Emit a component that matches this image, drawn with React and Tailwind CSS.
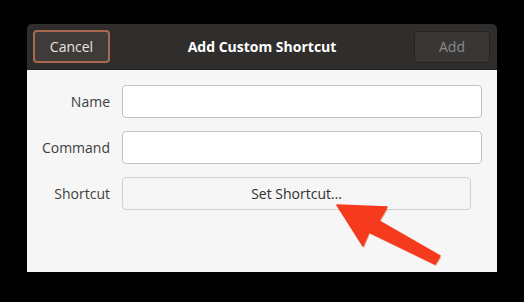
const Field = ({ label, children }) => (
  <div className="flex items-center h-[33px]">
    <div className="w-[83px] text-right text-[14px] text-[#3d3d3d]">{label}</div>
    <div className="ml-[12px] flex-1 h-full flex">{children}</div>
  </div>
);

const App = () => {
  return (
    <div
      className="relative w-[524px] h-[302px] bg-black overflow-hidden"
      style={{ fontFamily: '"Open Sans", "Noto Sans", sans-serif' }}
    >
      <div className="absolute left-[27px] top-[24px] w-[470px] rounded-t-[5px] overflow-hidden">
        <div className="h-[46px] bg-[#302e2d] flex items-center justify-between px-[6px] pr-[7px] border-b border-[#262423]">
          <button className="w-[77px] h-[33px] rounded-[4px] border-2 border-[#a9694f] bg-[#3e3b39] text-[14px] text-[#e8e6e3]">
            Cancel
          </button>
          <div className="text-[14px] font-bold text-white">Add Custom Shortcut</div>
          <button className="w-[76px] h-[32px] rounded-[4px] border border-[#262423] bg-[#393736] text-[14px] text-[#8c8a88]">
            Add
          </button>
        </div>
        <div className="h-[202px] bg-[#f6f6f6] pt-[15px] pr-[15px] flex flex-col gap-[13px]">
          <Field label="Name">
            <div className="flex-1 rounded-[4px] border border-[#c4c1bd] bg-white" />
          </Field>
          <Field label="Command">
            <div className="flex-1 rounded-[4px] border border-[#c4c1bd] bg-white" />
          </Field>
          <Field label="Shortcut">
            <div className="w-[349px] rounded-[4px] border border-[#d3d1ce] bg-[repeating-linear-gradient(90deg,#f3f3f3_0px,#f3f3f3_1px,#f8f8f8_1px,#f8f8f8_2px)] flex items-center justify-center text-[14px] text-[#2f2f2f]">
              Set Shortcut…
            </div>
          </Field>
        </div>
      </div>
      <svg className="absolute left-0 top-0" width="524" height="302" viewBox="0 0 524 302">
        <polygon
          points="337,205 387,207 379,221 440,256 435,264 369,232 363,246"
          fill="#c92a12"
          opacity="0.35"
          transform="translate(1,2)"
        />
        <polygon
          points="337,205 387,207 379,221 440,256 435,264 369,232 363,246"
          fill="#f53a1d"
          stroke="#f53a1d"
          strokeWidth="1.5"
          strokeLinejoin="round"
        />
      </svg>
    </div>
  );
};

export default App;
